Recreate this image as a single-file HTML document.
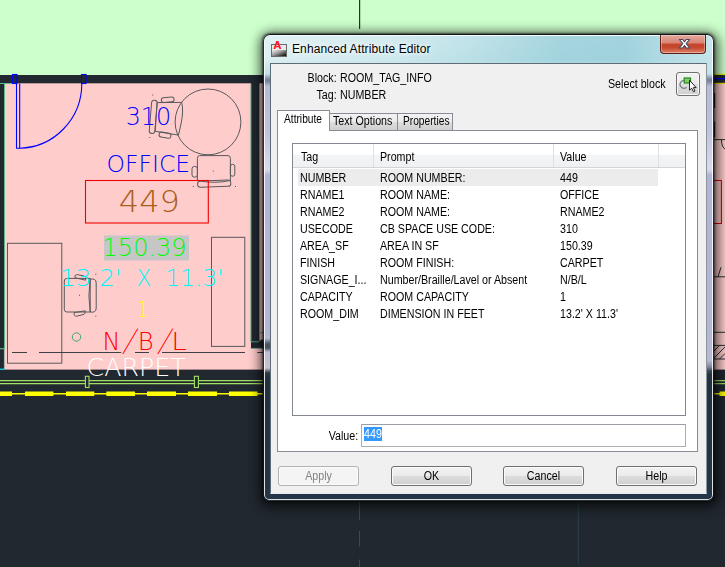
<!DOCTYPE html>
<html>
<head>
<meta charset="utf-8">
<title>Enhanced Attribute Editor</title>
<style>
html,body{margin:0;padding:0;}
body{width:725px;height:567px;overflow:hidden;position:relative;background:#ccffcc;font-family:"Liberation Sans",Arial,sans-serif;font-size:12px;color:#000;}
#cad{position:absolute;left:0;top:0;width:725px;height:567px;display:block;}
#cad text{font-family:"DejaVu Sans Light","DejaVu Sans","Liberation Sans",sans-serif;font-weight:200;}
.abs{position:absolute;}
.t{position:absolute;white-space:nowrap;line-height:14px;height:14px;transform:scaleX(.89);transform-origin:0 0;}
.tr{transform-origin:100% 0;}
#dlg{position:absolute;left:263px;top:34px;width:451px;height:467px;box-sizing:border-box;border:1px solid rgba(10,14,18,.85);border-radius:7px 7px 6px 6px;
 background:linear-gradient(to bottom,#cfe9ee 0px,#c3e4ea 38px,#c0dfe6 39px,#7e87a2 44px,#7a809c 46px,#b6b9d8 51px,#c0c2de 96px,#d4d5e9 126px,#d8d9ec 135px,#b1b4d6 140px,#b4b6d6 300px,#b9bbd8 303px,#4a5560 309px,#4a5560 313px,#c0bcd4 317px,#c8c0d0 333px,#2a3744 338px,#213140 345px,#243647 100%);
 box-shadow:inset 0 0 0 1px rgba(255,255,255,.85),0 0 2px 1px rgba(0,0,0,.5),0 2px 11px 3px rgba(0,0,0,.5),2px 3px 14px 3px rgba(0,0,0,.3);}
#client{position:absolute;left:270px;top:63px;width:437px;height:431px;box-sizing:border-box;border:1px solid #5f6b75;border-bottom-color:#e8ecef;border-right-color:#8d959c;background:#f0f0f0;}
.btn{position:absolute;box-sizing:border-box;height:19.5px;width:81px;border:1px solid #707070;border-radius:3px;background:linear-gradient(to bottom,#f2f2f2 0,#ebebeb 48%,#dddddd 52%,#cfcfcf 100%);box-shadow:inset 0 0 0 1px #fbfbfb;}
.btn.dis{border-color:#adb2b5;background:#f4f4f4;box-shadow:inset 0 0 0 1px #fcfcfc;color:#838383;}
.btn span{position:absolute;left:0;right:0;top:2px;text-align:center;line-height:14px;transform:scaleX(.89);}
.tab{position:absolute;box-sizing:border-box;border:1px solid #898c95;border-bottom:none;background:linear-gradient(to bottom,#f2f2f2 0,#ebebeb 50%,#dddddd 52%,#cfcfcf 100%);}
</style>
</head>
<body>
<svg id="cad" width="725" height="567" viewBox="0 0 725 567">
 <defs>
  <linearGradient id="shL" x1="0" x2="1" y1="0" y2="0"><stop offset="0" stop-color="#000" stop-opacity="0"/><stop offset="1" stop-color="#000" stop-opacity=".32"/></linearGradient>
  <linearGradient id="shR" x1="0" x2="1" y1="0" y2="0"><stop offset="0" stop-color="#000" stop-opacity=".36"/><stop offset="1" stop-color="#000" stop-opacity="0"/></linearGradient>
 </defs>
 <!-- backgrounds -->
 <rect x="0" y="0" width="725" height="567" fill="#ccffcc"/>
 <rect x="0" y="83" width="725" height="287" fill="#ffcccc"/>
 <rect x="0" y="369.6" width="725" height="198" fill="#212830"/>
 <!-- top wall -->
 <rect x="0" y="75" width="725" height="8.3" fill="#212830"/>
 <line x1="0" y1="83.5" x2="12" y2="83.5" stroke="#5fb98a" stroke-width="1"/>
 <!-- left wall -->
 <rect x="0" y="84" width="4.2" height="285.6" fill="#212830"/>
 <line x1="4.5" y1="84" x2="4.5" y2="349" stroke="#5fb98a" stroke-width="1"/>
 <line x1="0" y1="348.7" x2="4.8" y2="348.7" stroke="#5fb98a" stroke-width="1.2"/>
 <line x1="4.4" y1="349" x2="4.4" y2="369" stroke="#9db5b2" stroke-width=".8"/>
 <line x1="0" y1="369.2" x2="4.4" y2="369.2" stroke="#00e5ff" stroke-width="1.2"/>
 <!-- right wall of room -->
 <rect x="251" y="83" width="8.6" height="259" fill="#212830"/>
 <rect x="251" y="341" width="13" height="7.4" fill="#212830"/>
 <rect x="260.4" y="339.6" width="4" height="3" fill="#212830"/>
 <path d="M251 84V341.8H259" fill="none" stroke="#4fa878" stroke-width="1"/>
 <path d="M259.7 84V341" fill="none" stroke="#4fa878" stroke-width="1"/>
 <line x1="259.6" y1="332.7" x2="264" y2="332.7" stroke="#4fa878" stroke-width="1"/>
 <line x1="251" y1="348.4" x2="264" y2="348.4" stroke="#7fa399" stroke-width="1"/>
 <!-- door -->
 <g fill="none" stroke="#0000ff" stroke-width="1.1">
  <rect x="12.5" y="74.5" width="4.5" height="9"/>
  <rect x="81.5" y="74.5" width="4.5" height="9"/>
  <path d="M16.5 83.5V148.2H19.7V83.5"/>
  <path d="M19.7 148.2A63.5 64.7 0 0 0 81.8 83.5"/>
 </g>
 <!-- furniture -->
 <g fill="none" stroke="#58595b" stroke-width="1">
  <circle cx="208" cy="121.9" r="32.9"/>
  <!-- chair 1 -->
  <path d="M157.1 102.6L181.7 102.4C183.2 108 182.6 116 181.4 122L178.5 135.1L155.2 131.3Z"/>
  <rect x="150.4" y="100.3" width="5.6" height="33.2" rx="2.7" transform="rotate(4.8 153.2 117)"/>
  <rect x="161.3" y="97.3" width="12.8" height="4.9" rx="2.4" transform="rotate(-5 167.7 99.8)"/>
  <rect x="159" y="132.7" width="12" height="5" rx="2.4" transform="rotate(10 165 135.2)"/>
  <!-- chair 2 -->
  <path d="M199.5 155.6H228Q230.4 155.6 230.4 158.5V180.5Q214 184 197.4 180.5V158.5Q197.4 155.6 199.5 155.6Z"/>
  <rect x="197.6" y="180.6" width="33.2" height="6.2" rx="2.8" transform="rotate(-2 214 183.7)"/>
  <rect x="192" y="166.4" width="5.4" height="10.8" rx="2.4"/>
  <rect x="230.4" y="164.4" width="4.4" height="11.8" rx="2"/>
  <!-- chair 3 -->
  <path d="M66.8 278.4H90.2V312H66.8Q64.3 312 64.3 309.2V281Q64.3 278.4 66.8 278.4Z"/>
  <path d="M90.2 279.2Q96.2 278 96.2 283V308Q96.2 313.2 90.2 312Q87.6 295.6 90.2 279.2Z"/>
  <path d="M75 277.8Q74.2 274.6 77.2 274.6L84.2 276Q86.2 277 85.6 280.2Z"/>
  <path d="M74.2 312.6Q73.4 316.6 76.6 316.2L84 314.4Q85.8 313.4 85.2 310.8Z"/>
  <!-- desks -->
  <rect x="7.5" y="243.3" width="54.3" height="119.9"/>
  <rect x="211.5" y="237.3" width="33.3" height="109.1"/>
  <!-- dashed line -->
  <path d="M12 352.5H27M39 352.5H123M135 352.5H149M162 352.5H245M257.3 352.5H264" stroke="#3c3f44" stroke-width="1.1"/>
 </g>
 <g fill="#58595b">
  <rect x="152.2" y="94.6" width="1" height="1"/><rect x="149.3" y="137" width="1" height="1"/>
  <rect x="212.8" y="170.6" width="1" height="1"/><rect x="192.8" y="186" width="1" height="1"/><rect x="235" y="186" width="1" height="1"/>
  <rect x="79" y="294.8" width="1" height="1"/><rect x="95.3" y="273.8" width="1" height="1"/><rect x="95.3" y="315.6" width="1" height="1"/>
 </g>
 <circle cx="76.5" cy="337" r="4.2" fill="none" stroke="#3fa672" stroke-width="1"/>
 <!-- number box -->
 <rect x="85.5" y="180.5" width="122.8" height="42.5" fill="none" stroke="#ee0000" stroke-width="1.1"/>
 <rect x="104" y="235.5" width="85" height="25" fill="#c6c6c6"/>
 <!-- CAD texts -->
 <g stroke="none">
 <text x="125.7" y="124.8" font-size="24.7" fill="#0000ff" textLength="45.4" lengthAdjust="spacingAndGlyphs">310</text>
 <text x="106.6" y="171.8" font-size="23.3" fill="#0000ff" textLength="83.6" lengthAdjust="spacingAndGlyphs">OFFICE</text>
 <text x="118.8" y="212" font-size="31" fill="#a85f1a" textLength="61" lengthAdjust="spacingAndGlyphs">449</text>
 <text x="102.6" y="256.4" font-size="25.2" fill="#00fa00" textLength="84" lengthAdjust="spacingAndGlyphs">150.39</text>
 <text y="285.8" font-size="23.8" fill="#00f4fc"><tspan x="60" textLength="61.6" lengthAdjust="spacingAndGlyphs">13.2'</tspan> <tspan x="136.4" textLength="14.8" lengthAdjust="spacingAndGlyphs">X</tspan> <tspan x="165.6" textLength="58" lengthAdjust="spacingAndGlyphs">11.3'</tspan></text>
 <text x="137.6" y="317" font-size="21" fill="#ffff00" textLength="11" lengthAdjust="spacingAndGlyphs">1</text>
 <text y="349.6" font-size="25" fill="#ff0000"><tspan x="102.5" textLength="17.9" lengthAdjust="spacingAndGlyphs">N</tspan><tspan x="137.8" textLength="15.9" lengthAdjust="spacingAndGlyphs">B</tspan><tspan x="171.2" textLength="15.6" lengthAdjust="spacingAndGlyphs">L</tspan></text>
 <text transform="translate(120.1 351.3) scale(2.5 1.32)" font-size="24.6" fill="#ff0000" stroke="#ffcccc" stroke-width=".68">/</text>
 <text transform="translate(154.9 351.3) scale(2.5 1.32)" font-size="24.6" fill="#ff0000" stroke="#ffcccc" stroke-width=".68">/</text>
 </g>
 <text x="86.6" y="375.7" font-size="24.3" fill="#ffffff" textLength="99.2" lengthAdjust="spacingAndGlyphs">CARPET</text>
 <!-- bottom lines -->
 <g stroke="#a3df63" stroke-width="1.1" fill="none">
  <line x1="0" y1="380.6" x2="725" y2="380.6"/>
  <line x1="0" y1="383.6" x2="725" y2="383.6"/>
  <rect x="85.4" y="376.3" width="3.6" height="11.2" fill="#212830"/>
  <rect x="194.4" y="376.3" width="4" height="11.2" fill="#212830"/>
 </g>
 <line x1="0" y1="393.8" x2="725" y2="393.8" stroke="#ffff00" stroke-width="1.4"/>
 <path d="M0 393.8H12M25 393.8H53.4M66 393.8H94.3M106.4 393.8H135M147 393.8H176M188 393.8H217M229 393.8H257.5M719.5 393.8H725" stroke="#ffff00" stroke-width="4.6" fill="none"/>
 <!-- misc lines -->
 <line x1="359.6" y1="0" x2="359.6" y2="29" stroke="#2b3036" stroke-width="1.2"/>
 <path d="M359.5 502V520M359.5 531V546.6M359.5 559.5V567" stroke="#2f4f5a" stroke-width="1"/>
 <line x1="578.3" y1="500" x2="578.3" y2="564.5" stroke="#27414b" stroke-width="1"/>
 <!-- right of dialog -->
 <line x1="713" y1="74.4" x2="725" y2="74.4" stroke="#e8e800" stroke-width="1.2"/>
 <line x1="713" y1="83.4" x2="725" y2="83.4" stroke="#e8e800" stroke-width="1.2"/>
 <line x1="713" y1="78.7" x2="725" y2="78.7" stroke="#0000e0" stroke-width="1.5"/>
 <g stroke="#2b2f36" stroke-width="1" fill="none">
  <path d="M714.6 93V108M714.6 121.6V137.5" stroke-width="1.2"/>
  <path d="M713 139.6H725M721.4 139.6Q721.6 147.5 725.5 149.4"/>
  <path d="M713 276.8H725M718 276.8L721 267.2"/>
  <path d="M713 332.3H725M713 345.4H725M713 359H725"/>
  <path d="M713 352L719.6 345.4M713 359L725 347M719.5 359L725 353.5"/>
 </g>
 <path d="M705 180.5H721.4V223.5H705" fill="none" stroke="#dd0000" stroke-width="1.1"/>
 <!-- shadows around dialog -->
</svg>

<div id="dlg"></div>
<div class="abs" style="left:265px;top:36px;width:447px;height:34px;border-radius:5px 5px 0 0;-webkit-mask-image:linear-gradient(to bottom,#000 0,#000 70%,transparent 100%);mask-image:linear-gradient(to bottom,#000 0,#000 70%,transparent 100%);background:linear-gradient(100deg,rgba(255,255,255,.38) 0%,rgba(255,255,255,.12) 28%,rgba(110,185,202,.12) 45%,rgba(110,185,202,.42) 66%,rgba(110,185,202,.45) 80%,rgba(180,220,230,.1) 100%);"></div>
<!-- title bar -->
<svg class="abs" style="left:271px;top:40px" width="18" height="18" viewBox="0 0 18 18">
 <defs><linearGradient id="ig" x1="0" y1="0" x2="1" y2="1"><stop offset="0" stop-color="#f4f4f4"/><stop offset=".45" stop-color="#9a9a9a"/><stop offset="1" stop-color="#050505"/></linearGradient></defs>
 <rect x=".5" y="4.5" width="15" height="12" fill="#e9e9e9" stroke="#6a6a6a"/>
 <rect x="1" y="10" width="14" height="6" fill="url(#ig)"/>
 <text x="2.2" y="9.2" font-family="Liberation Sans,Arial,sans-serif" font-weight="bold" font-size="11.5" fill="#ff1020">A</text>
</svg>
<div class="abs" style="left:292px;top:41px;height:16px;line-height:16px;font-size:12px;white-space:nowrap;text-shadow:0 0 6px #fff,0 0 4px #fff;letter-spacing:.1px">Enhanced Attribute Editor</div>
<div class="abs" id="close" style="left:660px;top:35px;width:46px;height:19px;box-sizing:border-box;border:1px solid #5e2019;border-top:none;border-radius:0 0 4px 4px;background:linear-gradient(to bottom,#e4a99d 0,#d78373 45%,#c6452c 50%,#c5482f 70%,#dc8266 100%);box-shadow:inset 0 0 0 1px rgba(255,255,255,.35);">
 <svg class="abs" style="left:17px;top:3px" width="13" height="11" viewBox="0 0 13 11"><path d="M1.4 1.5H4.7L6.5 3.8L8.3 1.5H11.6L8.2 5.6L11.7 10H8.4L6.5 7.5L4.6 10H1.3L4.8 5.6Z" fill="#fff" stroke="#43485e" stroke-width="1.1" stroke-linejoin="round"/></svg>
</div>

<div class="abs" style="left:707px;top:330px;width:6px;height:42px;background:linear-gradient(to bottom,#b4b6d6 0,#babad6 72%,#7f879e 88%,#2a3744 100%);box-shadow:inset -1px 0 0 rgba(255,255,255,.85);"></div>
<div id="client"></div>
<!-- block / tag -->
<div class="t tr" style="right:388px;top:71px;">Block:</div>
<div class="t" style="left:340px;top:71px;">ROOM_TAG_INFO</div>
<div class="t tr" style="right:388px;top:88px;">Tag:</div>
<div class="t" style="left:340px;top:88px;">NUMBER</div>
<div class="t" style="left:608px;top:77px;">Select block</div>
<div class="abs" style="left:676px;top:72px;width:24px;height:24px;box-sizing:border-box;border:1px solid #707070;border-radius:3px;background:linear-gradient(to bottom,#f2f2f2 0,#ebebeb 48%,#dddddd 52%,#cfcfcf 100%);box-shadow:inset 0 0 0 1px #fafafa;">
 <svg class="abs" style="left:1px;top:1px" width="20" height="20" viewBox="0 0 20 20">
  <path d="M7.85 6.9A3.9 3.9 0 1 0 8.6 13.3" fill="none" stroke="#7d8288" stroke-width="1.3"/>
  <rect x="6.2" y="4" width="6.3" height="5" fill="#86cc62" stroke="#1e8a1e" stroke-width="1.2"/>
  <path d="M11.5 6.2V16.2L13.7 14.2L15.4 17.8L17 17L15.3 13.6H18.2Z" fill="#fff" stroke="#111" stroke-width=".9" stroke-linejoin="round"/>
 </svg>
</div>

<!-- tab page -->
<div class="abs" style="left:277px;top:130px;width:421px;height:322px;box-sizing:border-box;border:1px solid #898c95;background:#fff;"></div>
<div class="tab" style="left:329px;top:113px;width:69px;height:17px;"></div>
<div class="tab" style="left:397px;top:113px;width:56px;height:17px;"></div>
<div class="tab" style="left:277px;top:110px;width:53px;height:21px;background:#fff;"></div>
<div class="t" style="left:284px;top:112px;transform:scaleX(.85)">Attribute</div>
<div class="t" style="left:333px;top:114px;">Text Options</div>
<div class="t" style="left:403px;top:114px;transform:scaleX(.85)">Properties</div>

<!-- list view -->
<div class="abs" style="left:292px;top:143px;width:394px;height:273px;box-sizing:border-box;border:1px solid #828790;background:#fff;"></div>
<div class="abs" style="left:293px;top:144px;width:392px;height:24px;box-sizing:border-box;border-bottom:1px solid #d5d5d5;background:linear-gradient(to bottom,#ffffff 0,#ffffff 45%,#f3f4f5 50%,#f0f1f2 100%);"></div>
<div class="abs" style="left:373px;top:144px;width:1px;height:23px;background:#dfe0e2"></div>
<div class="abs" style="left:553px;top:144px;width:1px;height:23px;background:#dfe0e2"></div>
<div class="abs" style="left:658px;top:144px;width:1px;height:23px;background:#dfe0e2"></div>
<div class="abs" style="left:298px;top:169px;width:360px;height:17px;background:#ececec;"></div>
<div class="t" style="left:301px;top:150px;">Tag</div>
<div class="t" style="left:380px;top:150px;">Prompt</div>
<div class="t" style="left:560px;top:150px;">Value</div>

<div class="t" style="left:300px;top:171px;">NUMBER</div><div class="t" style="left:380px;top:171px;">ROOM NUMBER:</div><div class="t" style="left:560px;top:171px;">449</div>
<div class="t" style="left:300px;top:188px;">RNAME1</div><div class="t" style="left:380px;top:188px;">ROOM NAME:</div><div class="t" style="left:560px;top:188px;">OFFICE</div>
<div class="t" style="left:300px;top:205px;">RNAME2</div><div class="t" style="left:380px;top:205px;">ROOM NAME:</div><div class="t" style="left:560px;top:205px;">RNAME2</div>
<div class="t" style="left:300px;top:222px;">USECODE</div><div class="t" style="left:380px;top:222px;">CB SPACE USE CODE:</div><div class="t" style="left:560px;top:222px;">310</div>
<div class="t" style="left:300px;top:239px;">AREA_SF</div><div class="t" style="left:380px;top:239px;">AREA IN SF</div><div class="t" style="left:560px;top:239px;">150.39</div>
<div class="t" style="left:300px;top:256px;">FINISH</div><div class="t" style="left:380px;top:256px;">ROOM FINISH:</div><div class="t" style="left:560px;top:256px;">CARPET</div>
<div class="t" style="left:300px;top:273px;">SIGNAGE_I...</div><div class="t" style="left:380px;top:273px;">Number/Braille/Lavel or Absent</div><div class="t" style="left:560px;top:273px;">N/B/L</div>
<div class="t" style="left:300px;top:290px;">CAPACITY</div><div class="t" style="left:380px;top:290px;">ROOM CAPACITY</div><div class="t" style="left:560px;top:290px;">1</div>
<div class="t" style="left:300px;top:307px;">ROOM_DIM</div><div class="t" style="left:380px;top:307px;">DIMENSION IN FEET</div><div class="t" style="left:560px;top:307px;">13.2' X 11.3'</div>

<!-- value row -->
<div class="t tr" style="right:367px;top:429px;">Value:</div>
<div class="abs" style="left:361px;top:424px;width:325px;height:23px;box-sizing:border-box;border:1px solid #abadb3;border-top-color:#9a9da4;background:#fff;"></div>
<div class="abs" style="left:364px;top:427px;width:18px;height:14px;background:#3399ff;"></div>
<div class="t" style="left:364px;top:427px;color:#fff;">449</div>

<!-- buttons -->
<div class="btn dis" style="left:278px;top:466px;"><span>Apply</span></div>
<div class="btn" style="left:391px;top:466px;"><span>OK</span></div>
<div class="btn" style="left:503px;top:466px;"><span>Cancel</span></div>
<div class="btn" style="left:616px;top:466px;"><span>Help</span></div>
</body>
</html>
